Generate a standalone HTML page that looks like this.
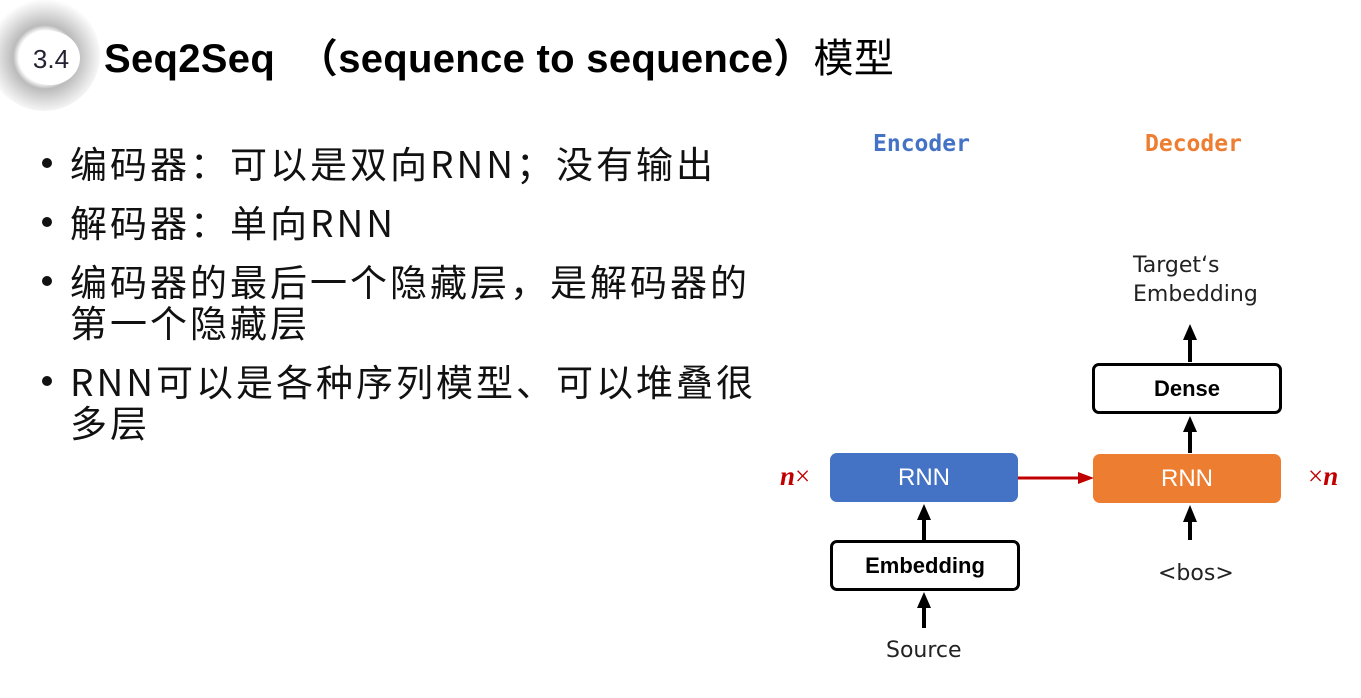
<!DOCTYPE html>
<html><head><meta charset="utf-8"><style>
body{margin:0;width:1361px;height:698px;background:#fff;position:relative;overflow:hidden;font-family:"Liberation Sans","Noto Sans CJK SC",sans-serif;}
.a{position:absolute;white-space:nowrap;}
.t{font-size:40px;left:104px;top:26px;font-weight:bold;color:#000;letter-spacing:0.3px}
.b{font-size:37px;letter-spacing:3px;left:70px;color:#111;line-height:41px;font-family:"Noto Sans CJK SC","Liberation Sans",sans-serif;}
.dot{position:absolute;left:42px;width:10px;height:10px;border-radius:50%;background:#111;}
.box{position:absolute;border-radius:7px;display:flex;align-items:center;justify-content:center;font-size:22px;font-weight:bold;box-sizing:border-box;}
.lbl{font-size:22px;color:#222;font-family:"DejaVu Sans",sans-serif;}
</style></head><body>
<svg class="a" style="left:0;top:0" width="120" height="120">
<defs><radialGradient id="g" cx="45" cy="57" r="58" gradientUnits="userSpaceOnUse"><stop offset="0.45" stop-color="#fff"/><stop offset="0.55" stop-color="#bbb"/><stop offset="0.8" stop-color="#e2e2e2"/><stop offset="1" stop-color="#fff"/></radialGradient></defs>
<circle cx="44" cy="55" r="56" fill="url(#g)"/>
<ellipse cx="50" cy="58" rx="30" ry="27" fill="#fff"/>
<text x="51" y="68" font-size="26" text-anchor="middle" font-family="Liberation Sans" fill="#223">3.4</text>
</svg>
<div class="a t">Seq2Seq &nbsp;（sequence to sequence）<span style="font-weight:normal">模型</span></div>
<div class="dot" style="top:158px"></div><div class="a b" style="top:142px">编码器：可以是双向RNN；没有输出</div>
<div class="dot" style="top:217px"></div><div class="a b" style="top:201px">解码器：单向RNN</div>
<div class="dot" style="top:276px"></div><div class="a b" style="top:260px">编码器的最后一个隐藏层，是解码器的<br>第一个隐藏层</div>
<div class="dot" style="top:376px"></div><div class="a b" style="top:360px">RNN可以是各种序列模型、可以堆叠很<br>多层</div>
<div class="a" style="left:873px;top:131px;font-size:23px;font-weight:bold;color:#4472c4;font-family:'DejaVu Sans Mono',monospace">Encoder</div>
<div class="a" style="left:1145px;top:131px;font-size:23px;font-weight:bold;color:#ed7d31;font-family:'DejaVu Sans Mono',monospace">Decoder</div>
<div class="a lbl" style="left:1133px;top:251px;line-height:29px">Target‘s<br>Embedding</div>
<div class="box" style="left:1092px;top:363px;width:190px;height:51px;border:3px solid #000;">Dense</div>
<div class="box" style="left:830px;top:453px;width:188px;height:49px;background:#4472c4;color:#fff;font-weight:normal;font-size:24px">RNN</div>
<div class="box" style="left:1093px;top:454px;width:188px;height:49px;background:#ed7d31;color:#fff;font-weight:normal;font-size:24px">RNN</div>
<div class="box" style="left:830px;top:540px;width:190px;height:51px;border:3px solid #000;">Embedding</div>
<div class="a lbl" style="left:1158px;top:561px">&lt;bos&gt;</div>
<div class="a lbl" style="left:886px;top:638px">Source</div>
<div class="a" style="left:780px;top:461px;font-size:27px;color:#c00000;font-family:'Liberation Serif',serif"><b><i>n</i></b>×</div>
<div class="a" style="left:1308px;top:461px;font-size:27px;color:#c00000;font-family:'Liberation Serif',serif">×<b><i>n</i></b></div>
<svg class="a" style="left:0;top:0" width="1361" height="698">
<g stroke="#000" stroke-width="4" fill="#000">
<line x1="1190" y1="362" x2="1190" y2="338"/><polygon points="1183,340 1197,340 1190,324" stroke="none"/>
<line x1="1190" y1="453" x2="1190" y2="430"/><polygon points="1183,432 1197,432 1190,416" stroke="none"/>
<line x1="924" y1="540" x2="924" y2="518"/><polygon points="917,520 931,520 924,504" stroke="none"/>
<line x1="1190" y1="540" x2="1190" y2="520"/><polygon points="1183,522 1197,522 1190,505" stroke="none"/>
<line x1="924" y1="628" x2="924" y2="606"/><polygon points="917,608 931,608 924,592" stroke="none"/>
</g>
<line x1="1018" y1="478" x2="1080" y2="478" stroke="#c00000" stroke-width="3"/>
<polygon points="1078,472 1094,478 1078,484" fill="#c00000"/>
</svg>
</body></html>
